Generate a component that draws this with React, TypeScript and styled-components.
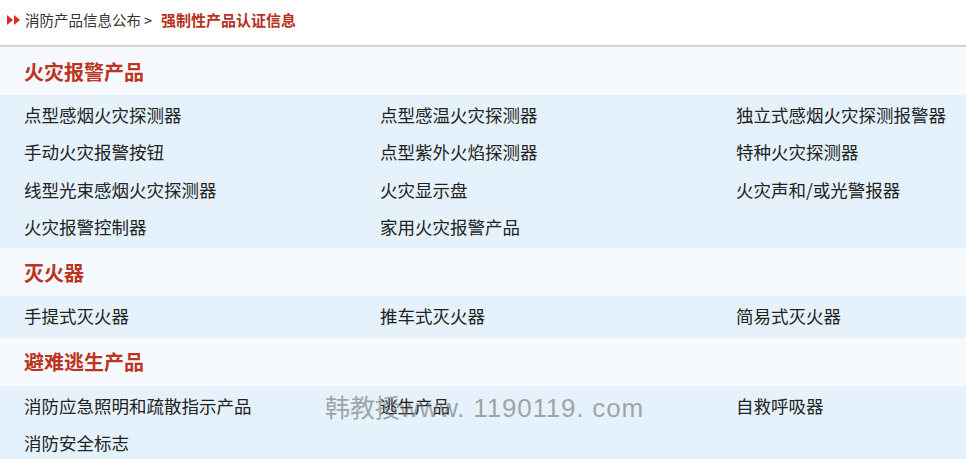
import React from "react";
import styled, { createGlobalStyle } from "styled-components";

const Global = createGlobalStyle`
  html, body { margin: 0; padding: 0; background: #ffffff; }
  body { font-family: "Microsoft YaHei", "Noto Sans CJK SC", sans-serif; overflow: hidden; }
  #root { width: 966px; overflow: hidden; }
`;

const Page = styled.div`
  position: relative;
  width: 966px;
  height: 459px;
  overflow: hidden;
  background: #ffffff;
`;

const Crumb = styled.div`
  height: 47px;
  display: flex;
  align-items: center;
  padding: 0 0 6px 7px;
  box-sizing: border-box;
  border-bottom: 2px solid #d4d4d4;
  font-size: 14.5px;
  color: #333;
`;

const Arrows = styled.svg`
  width: 14px;
  height: 10px;
  margin-right: 4px;
  flex: none;
`;

const CrumbLink = styled.span`
  color: #333;
`;

const CrumbSep = styled.span`
  margin: 0 9px 0 3px;
  color: #333;
`;

const CrumbCurrent = styled.span`
  color: #b8321f;
  font-size: 15px;
  font-weight: bold;
`;

const SectionHead = styled.div`
  height: 48px;
  display: flex;
  align-items: center;
  padding-left: 24px;
  background: #f6faff;
  color: #bd3420;
  font-size: 20px;
  font-weight: bold;
`;

const Items = styled.div`
  display: grid;
  grid-template-columns: repeat(3, 356px);
  padding: 1px 0 3px 24px;
  background: #e5f2fc;
`;

const Item = styled.div`
  height: 37.33px;
  line-height: 37.33px;
  font-size: 17.5px;
  color: #222;
  white-space: nowrap;
`;

const Watermark = styled.div`
  position: absolute;
  left: 325px;
  top: 389px;
  display: flex;
  align-items: baseline;
  white-space: nowrap;
  color: rgba(110, 110, 110, 0.6);
  pointer-events: none;
`;

const WatermarkCn = styled.span`
  font-family: "Noto Sans CJK SC", sans-serif;
  font-size: 25px;
  line-height: 34px;
`;

const WatermarkUrl = styled.span`
  font-family: "Liberation Sans", Arial, sans-serif;
  font-size: 26px;
  line-height: 34px;
  letter-spacing: 0.8px;
`;

const sections: { title: string; items: string[] }[] = [
  {
    title: "火灾报警产品",
    items: [
      "点型感烟火灾探测器",
      "点型感温火灾探测器",
      "独立式感烟火灾探测报警器",
      "手动火灾报警按钮",
      "点型紫外火焰探测器",
      "特种火灾探测器",
      "线型光束感烟火灾探测器",
      "火灾显示盘",
      "火灾声和/或光警报器",
      "火灾报警控制器",
      "家用火灾报警产品",
    ],
  },
  {
    title: "灭火器",
    items: ["手提式灭火器", "推车式灭火器", "简易式灭火器"],
  },
  {
    title: "避难逃生产品",
    items: ["消防应急照明和疏散指示产品", "逃生产品", "自救呼吸器", "消防安全标志"],
  },
];

export default function App() {
  return (
    <Page>
      <Global />
      <Crumb>
        <Arrows viewBox="0 0 14 10">
          <polygon points="0,0 6,5 0,10" fill="#e2281e" />
          <polygon points="7,0 13,5 7,10" fill="#e2281e" />
        </Arrows>
        <CrumbLink>消防产品信息公布</CrumbLink>
        <CrumbSep>&gt;</CrumbSep>
        <CrumbCurrent>强制性产品认证信息</CrumbCurrent>
      </Crumb>
      {sections.map((s) => (
        <React.Fragment key={s.title}>
          <SectionHead>{s.title}</SectionHead>
          <Items>
            {s.items.map((it) => (
              <Item key={it}>{it}</Item>
            ))}
          </Items>
        </React.Fragment>
      ))}
      <Watermark>
        <WatermarkCn>韩教授</WatermarkCn>
        <WatermarkUrl>www. 1190119. com</WatermarkUrl>
      </Watermark>
    </Page>
  );
}
